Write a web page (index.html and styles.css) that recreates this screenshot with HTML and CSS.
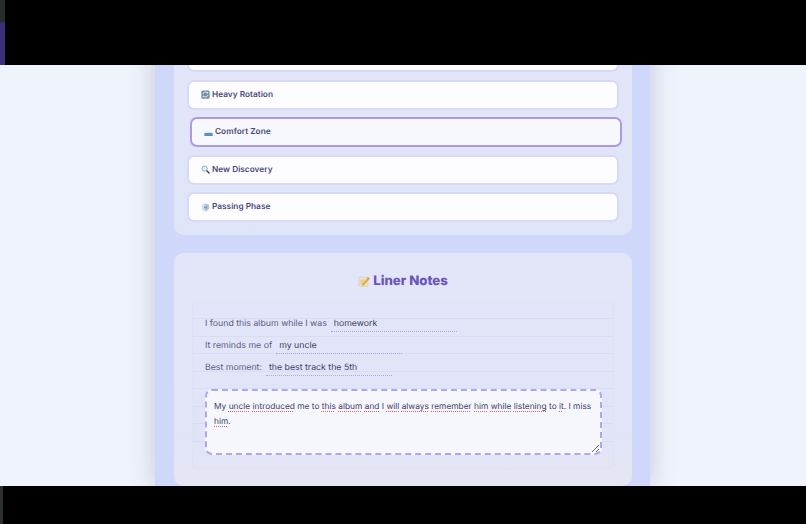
FILE: index.html
```html
<!DOCTYPE html>
<html>
<head>
  <title>Liner Notes</title>
  <meta name="viewport" content="width=device-width, initial-scale=1">
  <link rel="stylesheet" href="styles.css">
</head>
<body>
  <!-- Top bar -->
  <div class="bar top-bar">
    <div class="edge">
      <div class="edge-green"></div>
      <div class="edge-purple"></div>
    </div>
    <div class="black"></div>
  </div>

  <div class="page">
    <div class="shell">
      <!-- Album mood list -->
      <div class="card mood-card">
        <button class="mood"></button>
        <button class="mood">
          <svg class="icon" viewBox="0 0 12 12">
            <rect x="0.5" y="0.5" width="11" height="11" rx="2" fill="#6f8fa8"/>
            <path d="M2.6 5.4a3.5 3.5 0 0 1 6-1.6M9.4 6.6a3.5 3.5 0 0 1-6 1.6" fill="none" stroke="#eef3f7" stroke-width="1.2"/>
            <path d="M9.6 1.9v2.6H7zM2.4 10.1V7.5H5z" fill="#eef3f7"/>
          </svg>
          Heavy Rotation
        </button>
        <button class="mood selected">
          <svg class="icon" viewBox="0 0 12 12">
            <path d="M0.5 10V7.4C0.5 6.6 1 6.2 1.8 6.2h8.4c0.8 0 1.3 0.4 1.3 1.2V10z" fill="#5b94c4"/>
            <path d="M2 6.2 2.6 4.3h3L6 6.2z" fill="#e6edf5"/>
            <rect x="0.5" y="9.6" width="11" height="0.9" fill="#3f6d96"/>
          </svg>
          Comfort Zone
        </button>
        <button class="mood">
          <svg class="icon" viewBox="0 0 12 12">
            <path d="M7 7 10.8 10.8" stroke="#3d3d46" stroke-width="1.9" stroke-linecap="round"/>
            <circle cx="4.8" cy="4.8" r="3.5" fill="#e3edf6" stroke="#8d97a3" stroke-width="1.1"/>
          </svg>
          New Discovery
        </button>
        <button class="mood">
          <svg class="icon" viewBox="0 0 12 12">
            <path d="M6 0.7 10.6 2.3V6c0 2.7-2 4.4-4.6 5.3C3.4 10.4 1.4 8.7 1.4 6V2.3z" fill="#a9bfd8"/>
            <path d="M6 0.7V11.3C3.4 10.4 1.4 8.7 1.4 6V2.3z" fill="#d3deea"/>
            <circle cx="6" cy="5.8" r="1.9" fill="#7f9dbd"/>
          </svg>
          Passing Phase
        </button>
      </div>

      <!-- Liner notes -->
      <div class="card notes-card">
        <h2 class="notes-title">
          <svg class="title-icon" viewBox="0 0 14 14">
            <rect x="1" y="2.5" width="10.5" height="10.5" rx="1" fill="#efe6c8" stroke="#c9b98a" stroke-width="0.5"/>
            <path d="M2.8 6h5M2.8 8h4M2.8 10h3" stroke="#a9a08a" stroke-width="0.6"/>
            <path d="M5.2 10.4 11.6 2.6l2 1.6-6.4 7.8-2.6 0.7z" fill="#e8a93c"/>
            <path d="M11.6 2.6l2 1.6-0.9 1.1-2-1.6z" fill="#d98a86"/>
          </svg>
          Liner Notes
        </h2>
        <div class="notebook">
          <div class="prompt">
            <label>I found this album while I was</label>
            <input type="text" value="homework">
          </div>
          <div class="prompt">
            <label>It reminds me of</label>
            <input type="text" value="my uncle">
          </div>
          <div class="prompt">
            <label>Best moment:</label>
            <input type="text" value="the best track the 5th">
          </div>
          <div class="note-box">My <span class="typo">uncle</span> <span class="typo">introduced</span> me to <span class="typo">this</span> <span class="typo">album</span> <span class="typo">and</span> I <span class="typo">will</span> <span class="typo">always</span> <span class="typo">remember</span> <span class="typo">him</span> <span class="typo">while</span> <span class="typo">listening</span> to <span class="typo">it</span>. I miss <span class="typo">him</span>.</div>
        </div>
      </div>
    </div>
  </div>

  <!-- Bottom bar -->
  <div class="bar bottom-bar">
    <div class="edge edge-dark"></div>
    <div class="black"></div>
  </div>
</body>
</html>
```
FILE: styles.css
```css
/* Page frame */
html, body {
  margin: 0;
  height: 100%;
}

body {
  display: flex;
  flex-direction: column;
  height: 524px;
  overflow: hidden;
  background-color: #eff3fc;
  font-family: "Inter", "Liberation Sans", sans-serif;
  text-rendering: geometricPrecision;
}

/* Black bars */
.bar {
  display: flex;
  flex: none;
}

.top-bar {
  height: 65px;
}

.bottom-bar {
  height: 38px;
}

.black {
  flex: 1;
  background-color: #000;
}

.top-bar .edge {
  width: 5px;
  display: flex;
  flex-direction: column;
}

.edge-green {
  height: 22px;
  background-color: #252e28;
}

.edge-purple {
  flex: 1;
  background-color: #3a2f78;
}

.edge-dark {
  width: 3px;
  background-color: #2a302c;
}

/* Content area, anchored to the bottom so the top gets cut off */
.page {
  flex: 1;
  min-height: 0;
  overflow: hidden;
  display: flex;
  flex-direction: column;
  justify-content: flex-end;
  align-items: center;
}

.shell {
  flex: none;
  box-sizing: border-box;
  width: 495px;
  margin-right: 1px;
  padding: 0 18px 0 19px;
  display: flex;
  flex-direction: column;
  gap: 18px;
  background-color: #cfd7fb;
  box-shadow: 0 0 24px rgba(90, 90, 130, 0.28);
}

.card {
  border-radius: 10px;
  background: linear-gradient(180deg, #e3e6f9, #e0e4f7);
}

/* Mood list */
.mood-card {
  padding: 0 13px 13px;
  display: flex;
  flex-direction: column;
  gap: 7.5px;
}

.mood {
  box-sizing: border-box;
  height: 30px;
  flex: none;
  display: flex;
  align-items: center;
  gap: 2px;
  padding: 0 12px;
  background-color: #fdfdff;
  border: 2px solid #d6daf6;
  border-radius: 7px;
  color: #4a4a7c;
  font-family: inherit;
  font-size: 8.3px;
  font-weight: 600;
  text-align: left;
  text-rendering: geometricPrecision;
}

.mood.selected {
  transform: translateX(3px);
  background-color: #f7f8fe;
  border-color: #ad9ae4;
}

.icon {
  width: 9px;
  height: 9px;
  flex: none;
}

/* Liner notes */
.notes-card {
  padding: 19px 18px 17px;
  background: linear-gradient(180deg, #e3e6f9, #e1e4f6 80%, #e5e6f4);
}

.notes-title {
  margin: 0 0 12px;
  display: flex;
  justify-content: center;
  align-items: center;
  gap: 3px;
  height: 18px;
  color: #6a55bb;
  font-size: 13.2px;
  font-weight: 800;
}

.title-icon {
  width: 12px;
  height: 12px;
}

.notebook {
  padding: 10px 11px 13px 12px;
  border: 1px solid #dfe2f4;
  border-radius: 5px;
  background-image: repeating-linear-gradient(180deg, transparent 0, transparent 16.5px, #d9dcf3 16.5px, #d9dcf3 17.5px);
  background-position: 0 -1px;
}

.prompt {
  height: 22px;
  display: flex;
  align-items: center;
  gap: 4px;
  color: #5a5a84;
  font-size: 8.75px;
}

.prompt input {
  box-sizing: border-box;
  width: 126px;
  height: 16px;
  padding: 0 3px;
  background: transparent;
  border: none;
  border-bottom: 1px dotted #b3a4ea;
  outline: none;
  color: #3d3d66;
  font-family: inherit;
  font-size: 8.75px;
  text-rendering: geometricPrecision;
}

.note-box {
  box-sizing: border-box;
  height: 66px;
  margin-top: 10px;
  padding: 9px 7px 9px 7px;
  overflow: auto;
  resize: vertical;
  background-color: #f6f7fd;
  border: 2px dashed #b3a5ea;
  border-radius: 7px;
  color: #3d3d66;
  font-size: 8.35px;
  line-height: 15px;
}

/* Spell check squiggle */
.typo {
  text-decoration: underline dotted #e0606f 1px;
  text-underline-offset: 2px;
}
```
